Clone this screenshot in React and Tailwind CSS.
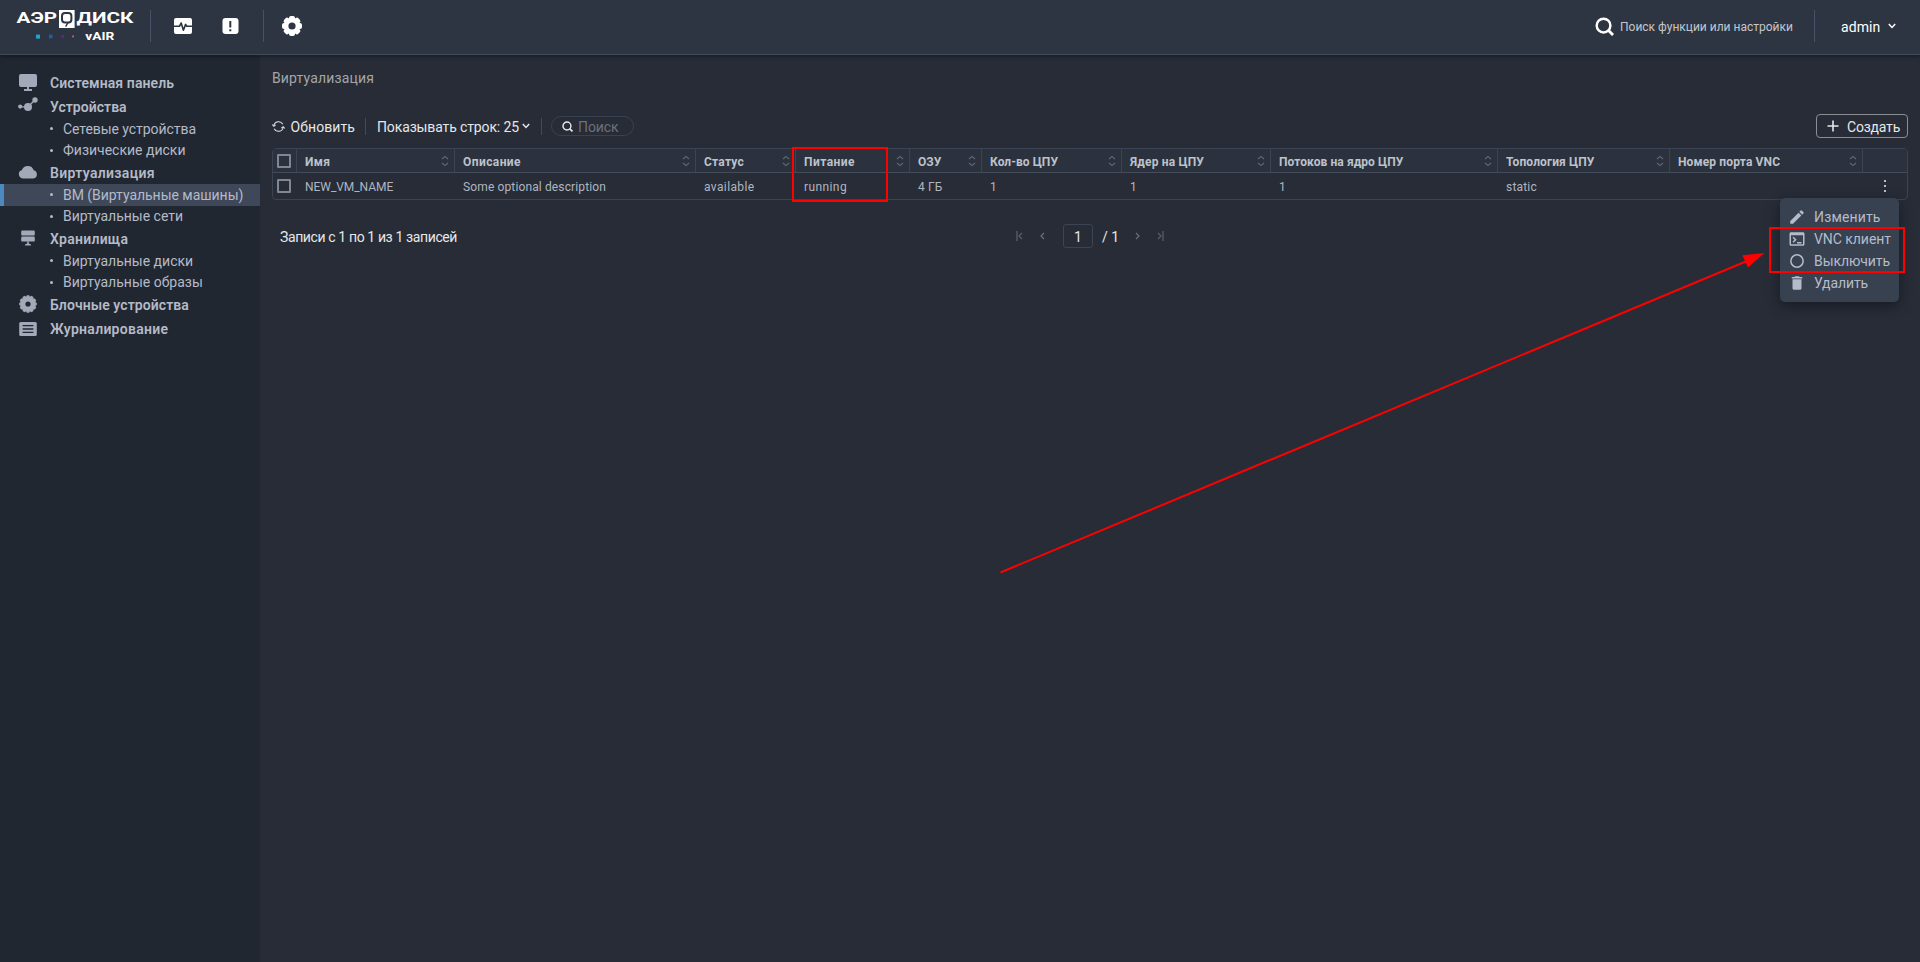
import React from "react";

function Sep({ className }) {
  return <div className={"w-px shrink-0 " + className} />;
}

function Chevron({ className = "" }) {
  return (
    <svg viewBox="0 0 8 6" className={"h-[6px] w-[8px] shrink-0 " + className} fill="none" stroke="currentColor" strokeWidth="1.5">
      <path d="M0.8 1 L4 4.4 L7.2 1" />
    </svg>
  );
}

function Magnifier({ className }) {
  return (
    <svg viewBox="0 0 20 20" className={"shrink-0 " + className} fill="none" stroke="currentColor" strokeWidth="2.6">
      <circle cx="9" cy="9" r="7.2" />
      <path d="M13.8 13.8 L19 19" strokeWidth="3" />
    </svg>
  );
}

function Logo() {
  return (
    <svg viewBox="0 0 120 36" className="ml-[14px] h-[36px] w-[120px] shrink-0">
      <g fill="#fff" fontFamily="Roboto, sans-serif" fontWeight="700">
        <text x="2.6" y="17" fontSize="15.2" textLength="40.5" lengthAdjust="spacingAndGlyphs">АЭР</text>
        <text x="62.5" y="17" fontSize="15.2" textLength="57" lengthAdjust="spacingAndGlyphs">ДИСК</text>
        <text x="71.3" y="34" fontSize="10" textLength="29" lengthAdjust="spacingAndGlyphs">vAIR</text>
      </g>
      <rect x="45" y="4" width="15.6" height="18" fill="#fff" />
      <rect x="48" y="7" width="9.4" height="9.4" rx="3" fill="#fff" stroke="#2e3542" strokeWidth="2" />
      <path d="M54 16.6 L51.6 20.6" stroke="#2e3542" strokeWidth="1.4" />
      <rect x="22" y="28.6" width="4" height="4" fill="#1ba7cc" />
      <rect x="35" y="28.6" width="3.5" height="3.7" fill="#1d5fae" />
      <rect x="47.2" y="29" width="2.8" height="2.8" fill="#6b1d8e" />
      <rect x="58.2" y="29.5" width="1.8" height="1.8" fill="#c9617f" />
    </svg>
  );
}

function HeaderGear() {
  return (
    <svg viewBox="0 0 20 20" className="ml-[18px] h-[20px] w-[20px] shrink-0" fill="#fff">
      {[0, 45, 90, 135].map((a) => (
        <rect key={a} x="7" y="0" width="6" height="20" rx="2" transform={`rotate(${a} 10 10)`} />
      ))}
      <circle cx="10" cy="10" r="8.2" />
      <circle cx="10" cy="10" r="3.6" fill="#2e3542" />
    </svg>
  );
}

function Header() {
  return (
    <header className="relative z-10 flex h-[55px] shrink-0 items-start border-b border-[#414b5c] bg-[#2e3542] text-white shadow-[0_1px_4px_rgba(0,0,0,0.45)]">
      <div className="flex h-[52px] flex-1 items-center">
        <div className="flex h-[52px] items-start pt-[6px]"><Logo /></div>
        <Sep className="ml-[16px] h-[32px] bg-[#455268]" />
        <svg viewBox="0 0 18 16" className="ml-[23px] h-[16px] w-[18px] shrink-0">
          <rect width="18" height="16" rx="2" fill="#fff" />
          <path d="M0 8.3 H5.4 L7.2 5 L9.4 12.2 L11.6 6.4 L12.8 8.3 H18" fill="none" stroke="#2e3542" strokeWidth="1.6" strokeLinejoin="round" />
        </svg>
        <svg viewBox="0 0 17 16" className="ml-[30px] h-[16px] w-[17px] shrink-0">
          <rect x="0.5" width="16" height="16" rx="3" fill="#fff" />
          <path d="M8.3 3 V9.4 M8.3 11.3 V13.3" stroke="#2e3542" strokeWidth="2" />
        </svg>
        <Sep className="ml-[24px] h-[32px] bg-[#455268]" />
        <HeaderGear />
        <Magnifier className="ml-auto h-[19px] w-[19px]" />
        <div className="ml-[6px] w-[194px] pt-[2px] text-[12px] tracking-[0px] text-[#c3c6cb]">Поиск функции или настройки</div>
        <Sep className="h-[32px] bg-[#455268]" />
        <div className="ml-[26px] w-[47px] pt-[2px] text-[14px] tracking-[0.1px]">admin</div>
        <Chevron className="mr-[24px]" />
      </div>
    </header>
  );
}

const sideIcons = {
  monitor: (
    <svg viewBox="0 0 20 20" className="h-[20px] w-[20px]" fill="currentColor">
      <rect x="1" y="1" width="18" height="13" rx="2" />
      <path d="M9 14h2v2h3v2H6v-2h3z" />
    </svg>
  ),
  devices: (
    <svg viewBox="0 0 20 20" className="h-[20px] w-[20px]" fill="currentColor">
      <circle cx="2.2" cy="10.6" r="2.1" />
      <circle cx="10" cy="11" r="4" />
      <circle cx="17" cy="4" r="2.7" />
      <path d="M2 10.8 H10 L17 4" fill="none" stroke="currentColor" strokeWidth="1.2" />
    </svg>
  ),
  cloud: (
    <svg viewBox="0 0 20 20" className="h-[20px] w-[20px]" fill="currentColor">
      <path d="M4.8 16.4 a4.3 4.3 0 0 1 -0.9 -8.4 a6.3 6.3 0 0 1 11.8 0.2 a4.2 4.2 0 0 1 -0.2 8.2 z" />
    </svg>
  ),
  storage: (
    <svg viewBox="0 0 20 20" className="h-[20px] w-[20px]" fill="currentColor">
      <rect x="3.2" y="2.6" width="13.6" height="5" rx="1.2" />
      <rect x="3.2" y="8.6" width="13.6" height="5" rx="1.2" />
      <path d="M9.2 13.6h1.6v1.8l2.2 1v1H7v-1l2.2-1z" />
    </svg>
  ),
  gear: (
    <svg viewBox="0 0 20 20" className="h-[20px] w-[20px]" fill="currentColor">
      {[0, 30, 60, 90, 120, 150].map((a) => (
        <rect key={a} x="8.4" y="1.2" width="3.2" height="17.6" rx="0.8" transform={`rotate(${a} 10 10)`} />
      ))}
      <circle cx="10" cy="10" r="7.8" />
      <circle cx="10" cy="10" r="2.6" fill="#212730" />
    </svg>
  ),
  journal: (
    <svg viewBox="0 0 20 20" className="h-[20px] w-[20px]" fill="currentColor">
      <rect x="1.2" y="3" width="17.6" height="14" rx="1.6" />
      <path d="M4.6 6.6h10.8M4.6 10h10.8M4.6 13.4h10.8" stroke="#212730" strokeWidth="1.3" />
    </svg>
  ),
};

const nav = [
  { icon: "monitor", label: "Системная панель", track: "tracking-[0.1px]", size: "h-[24px]", shift: "mt-[-1px]" },
  { icon: "devices", label: "Устройства", track: "tracking-[0.04px]", size: "h-[23px] pt-px", shift: "mt-[-3px]" },
  { label: "Сетевые устройства", track: "tracking-[-0.06px]" },
  { label: "Физические диски", track: "tracking-[0px]" },
  { icon: "cloud", label: "Виртуализация", track: "tracking-[0.32px]", size: "h-[23px] pt-px", shift: "mt-[-2px]" },
  { label: "ВМ (Виртуальные машины)", track: "tracking-[-0.03px]", active: true },
  { label: "Виртуальные сети", track: "tracking-[0px]" },
  { icon: "storage", label: "Хранилища", track: "tracking-[0.25px]", size: "h-[23px] pt-px", shift: "mt-[-2px]" },
  { label: "Виртуальные диски", track: "tracking-[0px]" },
  { label: "Виртуальные образы", track: "tracking-[0.01px]" },
  { icon: "gear", label: "Блочные устройства", track: "tracking-[0.07px]", size: "h-[24px]", shift: "mt-[-2px]" },
  { icon: "journal", label: "Журналирование", track: "tracking-[0.27px]", size: "h-[24px]", shift: "mt-0" },
];

function Sidebar() {
  return (
    <aside className="w-[260px] shrink-0 bg-[#212730] pt-[16px] text-[14px] text-[#b4bac8]">
      {nav.map((n) =>
        n.icon ? (
          <div key={n.label} className={"flex items-center pl-[18px] " + n.size}>
            <span className={"mr-[12px] shrink-0 text-[#a3a9b8] " + n.shift}>{sideIcons[n.icon]}</span>
            <span className={"whitespace-nowrap font-semibold leading-none " + n.track}>{n.label}</span>
          </div>
        ) : (
          <div
            key={n.label}
            className={
              "flex h-[21.5px] items-center border-l-4 pl-[46px] " +
              (n.active ? "border-[#4a8abf] bg-[#3f4859]" : "border-transparent")
            }
          >
            <span className="mr-[10px] h-[3px] w-[3px] shrink-0 rounded-full bg-current" />
            <span className={"whitespace-nowrap leading-none " + n.track}>{n.label}</span>
          </div>
        )
      )}
    </aside>
  );
}

function Toolbar() {
  return (
    <div className="flex h-[24px] items-center text-[14px] text-[#e6e7e9]">
      <svg viewBox="0 0 14 14" className="h-[13px] w-[13px] shrink-0" fill="none" stroke="currentColor" strokeWidth="1.1">
        <path d="M2 6.2 A5.1 5.1 0 0 1 11.6 4.6 M12 7.8 A5.1 5.1 0 0 1 2.4 9.4" />
        <path d="M0.3 4.8 L2 6.8 L3.9 5.2 M13.7 9.2 L12 7.2 L10.1 8.8" />
      </svg>
      <span className="ml-[5.5px] w-[74.5px] whitespace-nowrap pt-[2px] tracking-[0.1px]">Обновить</span>
      <Sep className="h-[17px] bg-[#414a59]" />
      <span className="ml-[11px] w-[145px] whitespace-nowrap pt-[2px] tracking-[-0.13px]">Показывать строк: 25</span>
      <Chevron />
      <Sep className="ml-[11px] h-[17px] bg-[#414a59]" />
      <div className="ml-[9px] flex h-[20px] w-[83px] items-center rounded-full border border-[#384252] pl-[10px]">
        <Magnifier className="h-[11px] w-[11px]" />
        <span className="ml-[5px] pt-[2px] leading-none tracking-[-0.09px] text-[#6d7178]">Поиск</span>
      </div>
      <button className="ml-auto flex h-[24px] w-[92px] items-center rounded-[4px] border border-[#8b8e93]">
        <svg viewBox="0 0 12 12" className="ml-[10px] h-[12px] w-[12px] shrink-0" stroke="currentColor" strokeWidth="1.6">
          <path d="M6 0.5 V11.5 M0.5 6 H11.5" />
        </svg>
        <span className="ml-[8px] pt-[2px] leading-none tracking-[-0.21px]">Создать</span>
      </button>
    </div>
  );
}

const cols = [
  { w: "w-[158px]", h: "Имя", ht: "tracking-[0.43px]", v: "NEW_VM_NAME", vt: "tracking-[-0.05px]" },
  { w: "w-[241px]", h: "Описание", ht: "tracking-[0.42px]", v: "Some optional description", vt: "tracking-[0.13px]" },
  { w: "w-[100px]", h: "Статус", ht: "tracking-[0.23px]", v: "available", vt: "tracking-[0.38px]" },
  { w: "w-[114px]", h: "Питание", ht: "tracking-[0.46px]", v: "running", vt: "tracking-[0.4px]" },
  { w: "w-[72px]", h: "ОЗУ", ht: "tracking-[0.1px]", v: "4 ГБ", vt: "tracking-[0.14px]" },
  { w: "w-[140px]", h: "Кол-во ЦПУ", ht: "tracking-[0.05px]", v: "1", vt: "" },
  { w: "w-[149px]", h: "Ядер на ЦПУ", ht: "tracking-[0.16px]", v: "1", vt: "" },
  { w: "w-[227px]", h: "Потоков на ядро ЦПУ", ht: "tracking-[0.08px]", v: "1", vt: "" },
  { w: "w-[172px]", h: "Топология ЦПУ", ht: "tracking-[0.12px]", v: "static", vt: "tracking-[0.2px]" },
  { w: "w-[193px]", h: "Номер порта VNC", ht: "tracking-[0.13px]", v: "", vt: "" },
];

function Check() {
  return <span className="h-[14px] w-[14px] shrink-0 rounded-[1px] border-2 border-[#818792]" />;
}

const menu = [
  {
    label: "Изменить",
    track: "tracking-[0.14px]",
    icon: <path d="M3 17.25V21h3.75L17.81 9.94l-3.75-3.75L3 17.25zM20.71 7.04a.996.996 0 0 0 0-1.41l-2.34-2.34a.996.996 0 0 0-1.41 0l-1.83 1.83 3.75 3.75 1.83-1.83z" />,
  },
  {
    label: "VNC клиент",
    track: "tracking-[-0.05px]",
    icon: <path d="M20 3H4c-1.11 0-2 .9-2 2v14c0 1.1.89 2 2 2h16c1.1 0 2-.9 2-2V5c0-1.1-.89-2-2-2zm0 16H4V7h16v12zm-2-1h-6v-2h6v2zM7.5 17l-1.41-1.41L8.67 13l-2.59-2.59L7.5 9l4 4-4 4z" />,
  },
  {
    label: "Выключить",
    track: "tracking-[-0.08px]",
    icon: <circle cx="12" cy="12" r="8.2" fill="none" stroke="currentColor" strokeWidth="2" />,
  },
  {
    label: "Удалить",
    track: "tracking-[-0.12px]",
    icon: <path d="M6 19c0 1.1.9 2 2 2h8c1.1 0 2-.9 2-2V7H6v12zM19 4h-3.5l-1-1h-5l-1 1H5v2h14V4z" />,
  },
];

function RowMenu() {
  return (
    <div className="absolute right-[8px] top-[25px] z-10 h-[104px] w-[119px] rounded-[5px] bg-[#38414f] pl-[8px] pt-[8px] text-[14px] text-[#b4bccc] shadow-[0_4px_14px_rgba(0,0,0,0.4)]">
      {menu.map((m) => (
        <div key={m.label} className="flex h-[22px] items-center">
          <svg viewBox="0 0 24 24" className="h-[18px] w-[18px] shrink-0" fill="currentColor">{m.icon}</svg>
          <span className={"ml-[8px] whitespace-nowrap pb-px leading-none " + m.track}>{m.label}</span>
        </div>
      ))}
    </div>
  );
}

function Table() {
  return (
    <div className="mt-[10px] h-[52px] rounded-[4px] border border-[#3a4454] text-[12px]">
      <div className="flex h-[24px] border-b border-[#434c5a] bg-[#2b313d] font-bold text-[#bdc2cb]">
        <div className="flex w-[24px] shrink-0 items-center border-r border-[#3a4454] pl-[4px]"><Check /></div>
        {cols.map((c) => (
          <div key={c.h} className={"flex shrink-0 items-center border-r border-[#3a4454] pl-[8px] pr-[5px] " + c.w}>
            <span className={"whitespace-nowrap pt-[3px] leading-none " + c.ht}>{c.h}</span>
            <svg viewBox="0 0 8 12" className="ml-auto h-[12px] w-[8px] shrink-0" fill="none" stroke="#636a76" strokeWidth="1.1">
              <path d="M1 4 L4 1.4 L7 4 M1 8 L4 10.6 L7 8" />
            </svg>
          </div>
        ))}
      </div>
      <div className="relative flex h-[26px] items-center text-[#b0b6c1]">
        <div className="w-[24px] shrink-0 pl-[4px]"><div className="flex"><Check /></div></div>
        {cols.map((c) => (
          <div key={c.h} className={"shrink-0 whitespace-nowrap pl-[8px] pt-[1px] leading-none " + c.w + " " + c.vt}>{c.v}</div>
        ))}
        <svg viewBox="0 0 2 12" className="ml-[21px] h-[12px] w-[2px]" fill="#b9bfca">
          <rect width="2" height="2" />
          <rect y="5" width="2" height="2" />
          <rect y="10" width="2" height="2" />
        </svg>
        <RowMenu />
      </div>
    </div>
  );
}

function Pager() {
  return (
    <div className="mt-[24px] flex h-[24px] items-center text-[14px] text-[#e6e7e9]">
      <span className="w-[744px] whitespace-nowrap pl-[8px] pt-[2px] tracking-[-0.38px]">Записи с 1 по 1 из 1 записей</span>
      <svg viewBox="0 0 7 10" className="h-[10px] w-[7px]" fill="none" stroke="#575e6a" strokeWidth="1.3">
        <path d="M1 0 V10 M6 2 L3 5 L6 8" />
      </svg>
      <svg viewBox="0 0 5 8" className="ml-[17px] h-[8px] w-[5px]" fill="none" stroke="#6a707b" strokeWidth="1.2">
        <path d="M4 1 L1 4 L4 7" />
      </svg>
      <span className="ml-[18px] flex h-[24px] w-[30px] items-center justify-center rounded-[3px] border border-[#3a4454] pt-[2px]">1</span>
      <span className="ml-[9px] w-[33px] whitespace-nowrap pt-[2px]">/ 1</span>
      <svg viewBox="0 0 5 8" className="h-[8px] w-[5px]" fill="none" stroke="#6a707b" strokeWidth="1.2">
        <path d="M1 1 L4 4 L1 7" />
      </svg>
      <svg viewBox="0 0 7 10" className="ml-[17px] h-[10px] w-[7px]" fill="none" stroke="#575e6a" strokeWidth="1.3">
        <path d="M6 0 V10 M1 2 L4 5 L1 8" />
      </svg>
    </div>
  );
}

function Annotations() {
  return (
    <svg viewBox="0 0 1920 962" className="pointer-events-none absolute left-0 top-0 z-20 h-[962px] w-[1920px]" fill="none" stroke="#f00" strokeWidth="2">
      <rect x="793" y="148" width="94" height="53" />
      <rect x="1770" y="228" width="134" height="44" />
      <path d="M1000.5 572.5 L1747 261" />
      <path d="M1764.5 253 L1742.3 255.2 L1748 267.6 Z" fill="#f00" stroke="none" />
    </svg>
  );
}

export default function App() {
  return (
    <div className="relative flex h-[962px] w-[1920px] flex-col overflow-hidden bg-[#272c37] font-['Roboto','Noto_Sans',sans-serif]">
      <Header />
      <div className="flex flex-1">
        <Sidebar />
        <main className="w-[1660px] pl-[12px] pr-[12px] pt-[13px]">
          <div className="h-[46px] text-[14px] leading-[20px] tracking-[0.15px] text-[#a5a6a8]">Виртуализация</div>
          <Toolbar />
          <Table />
          <Pager />
        </main>
      </div>
      <Annotations />
    </div>
  );
}
